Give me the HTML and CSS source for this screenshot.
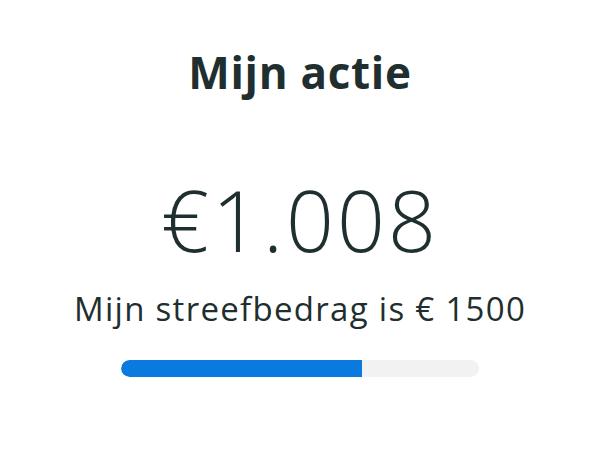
FILE: index.html
```html
<!DOCTYPE html>
<html lang="nl">
<head>
    <meta charset="UTF-8">
    <meta name="viewport" content="width=device-width, initial-scale=1.0">
    <title>Mijn actie</title>
    <link rel="stylesheet" href="styles.css">
</head>
<body>
    <main class="campaign">
        <h1 class="campaign-title">Mijn actie</h1>
        <div class="campaign-amount">€1.008</div>
        <p class="campaign-goal">Mijn streefbedrag is € 1500</p>
        <div class="progress">
            <div class="progress-fill" style="width: 67.2%"></div>
        </div>
    </main>
</body>
</html>
```

FILE: styles.css
```css
body {
    font-family: "Open Sans", "Noto Sans", sans-serif;
    margin: 0;
    padding: 0;
    background-color: #fff;
    color: #1f2e2e;
    font-variant-ligatures: none;
}

.campaign {
    display: flex;
    flex-direction: column;
    align-items: center;
    padding-top: 42px;
}

.campaign-title {
    margin: 0;
    font-size: 44px;
    font-weight: 700;
    line-height: 60px;
    letter-spacing: 0.7px;
}

.campaign-amount {
    margin-top: 68px;
    font-size: 84px;
    font-weight: 300;
    line-height: 100px;
    letter-spacing: 3px;
}

.campaign-goal {
    margin: 19px 0 0;
    font-size: 33px;
    line-height: 40px;
    letter-spacing: 1.3px;
}

.progress {
    width: 358px;
    height: 17px;
    margin-top: 31px;
    background-color: #f2f2f2;
    border-radius: 9px;
    overflow: hidden;
}

.progress-fill {
    height: 100%;
    background-color: #0a7adf;
    border-radius: 9px 0 0 9px;
}
```
